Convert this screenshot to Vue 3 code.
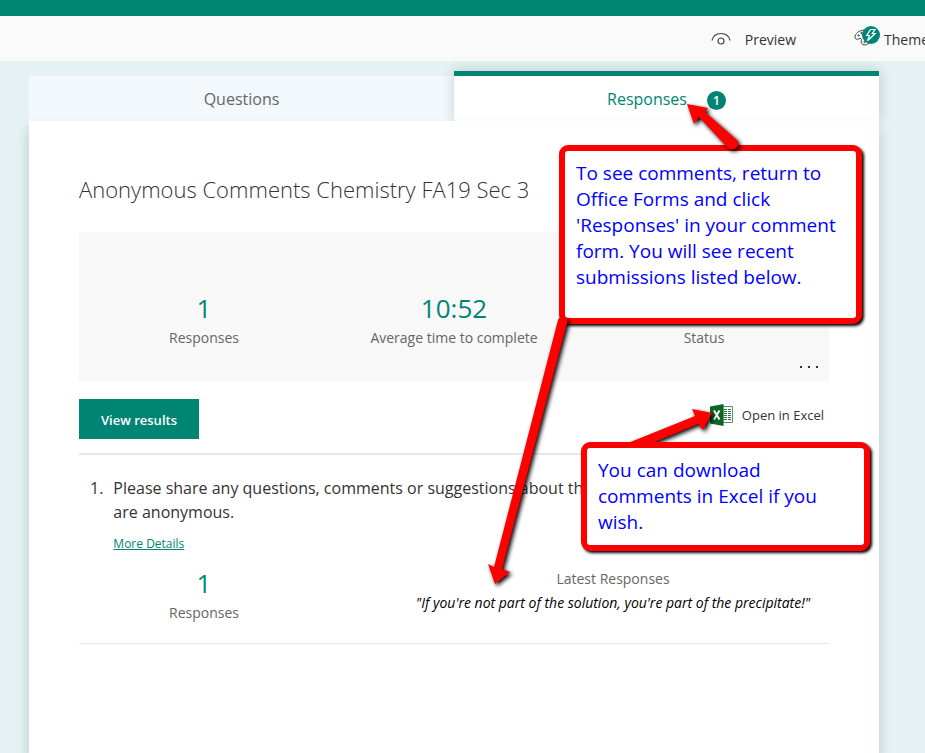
<template>
  <div class="page">
    <div class="brand-bar"></div>

    <header class="toolbar">
      <button type="button" class="tool preview">
        <svg class="eye" viewBox="0 0 20 14" aria-hidden="true">
          <path d="M1 8.500C2 4.200 5.600 1.500 10 1.500S18 4.200 19 8.500" />
          <circle cx="10" cy="9" r="3" />
        </svg>
        <span>Preview</span>
      </button>
      <button type="button" class="tool theme">
        <svg class="palette" viewBox="0 0 26 22" aria-hidden="true">
          <path
            class="outline"
            d="M10 5C5 5.500 1 8.500 1 12.200c0 2.200 2 2.600 3.800 1.600C6.600 12.800 8 13.600 7.400 15.500c-.6 2.200.4 4.600 3.400 4.500 2.400-.1 4.200-1.500 5-3.200"
          />
          <circle class="outline" cx="4.500" cy="10.500" r=".7" />
          <circle class="outline" cx="7.500" cy="8" r=".7" />
          <circle class="outline" cx="10.500" cy="17" r=".7" />
          <circle class="badge-fill" cx="17" cy="10" r="9" />
          <path class="bolt" d="M16.500 4.500h4.500l-2.700 4h2.900l-7.700 7.300 2-5.300h-2.700z" />
        </svg>
        <span>Theme</span>
      </button>
    </header>

    <main class="form">
      <nav class="tabs">
        <button type="button" class="tab">Questions</button>
        <button type="button" class="tab active">
          Responses <span class="count">1</span>
        </button>
      </nav>

      <section class="panel">
        <h1>Anonymous Comments Chemistry FA19 Sec 3</h1>

        <div class="summary">
          <div v-for="stat in stats" :key="stat.label" class="stat">
            <div class="value">{{ stat.value }}</div>
            <div class="label">{{ stat.label }}</div>
          </div>
          <button type="button" class="more" aria-label="More options">
            <i></i><i></i><i></i>
          </button>
        </div>

        <div class="actions">
          <button type="button" class="view-results">View results</button>
          <button type="button" class="excel">
            <svg viewBox="0 0 24 22" aria-hidden="true">
              <path d="M13 2.500h9.500v16H13z" fill="#fff" stroke="#5f8f69" />
              <path
                d="M14 5.500h3M18 5.500h3M14 7.500h3M18 7.500h3M14 9.500h3M18 9.500h3M14 11.500h3M18 11.500h3M14 13.500h3M18 13.500h3M14 15.500h3M18 15.500h3"
                stroke="#2c7543"
              />
              <path d="M0 2.500 13.500 0v22L0 19.500z" fill="#0a6622" />
              <path d="m4 6.500 5.500 9M9.500 6.500 4 15.500" stroke="#fff" stroke-width="2" />
            </svg>
            <span>Open in Excel</span>
          </button>
        </div>

        <article class="question">
          <div class="prompt">
            <span class="number">1.</span>
            <div>
              <p>Please share any questions, comments or suggestions about the<br />are anonymous.</p>
              <a href="#">More Details</a>
            </div>
          </div>
          <div class="answers">
            <div class="stat">
              <div class="value">1</div>
              <div class="label">Responses</div>
            </div>
            <div class="latest">
              <div class="label">Latest Responses</div>
              <q>If you're not part of the solution, you're part of the precipitate!</q>
            </div>
          </div>
        </article>
      </section>
    </main>

    <aside class="callout callout-comments">
      To see comments, return to<br />Office Forms and click<br />'Responses' in your comment<br />form. You
      will see recent<br />submissions listed below.
    </aside>
    <svg class="arrows" width="925" height="753" aria-hidden="true">
      <path d="M687 104 708 108 705 112 737 140Q740 144 737 147Q733 151 728 148L699 117 694 124Z" />
      <path d="M495 584 488 564 494 567 558 320Q560 316 564 317Q569 318 567 323L502 569 510 572Z" />
      <path d="M712 413 692 409 695 416 628 443 632 448 650 444 698 424 703 430Z" />
    </svg>
    <aside class="callout callout-excel">
      You can download<br />comments in Excel if you<br />wish.
    </aside>
  </div>
</template>

<script setup>
const stats = [
  { value: '1', label: 'Responses' },
  { value: '10:52', label: 'Average time to complete' },
  { value: 'Active', label: 'Status' }
];
</script>

<style>
body {
  margin: 0;
}
</style>

<style scoped>
.page {
  position: relative;
  display: flex;
  flex-direction: column;
  min-height: 100vh;
  overflow: hidden;
  background: #e5f1f2;
  color: #333;
  font-family: 'Segoe UI', 'Open Sans', 'Noto Sans', sans-serif;
}

button {
  padding: 0;
  border: 0;
  background: none;
  color: inherit;
  font: inherit;
  cursor: pointer;
}

.brand-bar {
  height: 16px;
  background: #008575;
}

.toolbar {
  display: flex;
  justify-content: flex-end;
  gap: 58px;
  height: 45px;
  padding-top: 1px;
  box-sizing: border-box;
  background: #fafafa;
  font-size: 14px;
}

.tool {
  display: flex;
  align-items: center;
  white-space: nowrap;
}

.preview {
  gap: 14px;
}

.theme {
  gap: 4px;
  margin-right: -4px;
}

.eye {
  width: 20px;
  height: 14px;
  fill: none;
  stroke: #444;
  stroke-width: 1.2;
}

.palette {
  width: 26px;
  height: 22px;
  margin-bottom: 6px;
}

.outline {
  fill: none;
  stroke: #444;
}

.badge-fill {
  fill: #008575;
}

.bolt {
  fill: none;
  stroke: #fff;
  stroke-width: 1.2;
}

.form {
  display: flex;
  flex: 1;
  flex-direction: column;
  margin: 10px 46px 0 29px;
}

.tabs {
  display: flex;
  align-items: flex-end;
}

.tab {
  display: flex;
  flex: 1;
  align-items: center;
  justify-content: center;
  height: 45px;
  background: #f2f8fb;
  color: #666;
  font-size: 16px;
}

.tab.active {
  gap: 20px;
  height: 50px;
  box-sizing: border-box;
  border-top: 5px solid #008575;
  background: #fff;
  box-shadow: 0 0 12px rgba(0, 50, 50, 0.2);
  color: #008575;
}

.count {
  width: 19px;
  height: 19px;
  margin-top: 3px;
  border-radius: 50%;
  background: #008575;
  color: #fff;
  font-size: 12px;
  font-weight: 600;
  line-height: 19px;
}

.panel {
  position: relative;
  flex: 1;
  padding: 50px 50px 0;
  background: #fff;
  box-shadow: 0 8px 12px rgba(0, 50, 50, 0.2);
}

h1 {
  margin: 0 0 25px;
  font-size: 22px;
  font-weight: 300;
  line-height: 36px;
  white-space: nowrap;
}

.summary {
  position: relative;
  display: grid;
  grid-template-columns: repeat(3, 1fr);
  height: 149px;
  padding-top: 58px;
  box-sizing: border-box;
  background: #f8f8f8;
}

.stat {
  text-align: center;
}

.value {
  color: #008575;
  font-size: 26px;
  line-height: 36px;
}

.label {
  color: #666;
  font-size: 14px;
  line-height: 24px;
}

.more {
  position: absolute;
  right: 11px;
  bottom: 9px;
  display: flex;
  gap: 6px;
  padding: 4px 0;
}

.more i {
  width: 2px;
  height: 2px;
  background: #333;
}

.actions {
  display: flex;
  align-items: center;
  justify-content: space-between;
  padding: 18px 0 14px;
  border-bottom: 2px solid #e8e8e8;
}

.view-results {
  width: 120px;
  height: 40px;
  padding-top: 2px;
  background: #008575;
  color: #fff;
  font-size: 13px;
  font-weight: 600;
}

.excel {
  display: flex;
  align-items: center;
  gap: 8px;
  margin: 0 5px 8px 0;
  font-size: 13px;
}

.excel svg {
  width: 24px;
  height: 22px;
  fill: none;
}

.question {
  padding: 21px 0 18px;
  border-bottom: 1px solid #e8e8e8;
}

.prompt {
  display: flex;
  gap: 10px;
  padding-left: 11px;
  font-size: 16px;
  line-height: 24px;
}

.prompt p {
  margin: 0 0 8px;
  white-space: nowrap;
}

.prompt a {
  display: block;
  color: #008575;
  font-size: 12px;
}

.answers {
  display: grid;
  grid-template-columns: 250px 1fr;
  gap: 68px;
  padding-top: 9px;
}

.latest {
  padding-top: 2px;
  text-align: center;
}

.latest q {
  display: block;
  color: #000;
  font-size: 14px;
  font-style: italic;
  line-height: 24px;
  quotes: '"' '"';
  white-space: nowrap;
}

/* Annotations drawn over the form */
.callout {
  position: absolute;
  box-sizing: border-box;
  border: 6px solid #f00;
  border-radius: 9px;
  background: #fff;
  box-shadow: 2px 2px 3px #000;
  color: #00f;
  font-size: 19px;
  line-height: 26px;
  white-space: nowrap;
}

.callout-comments {
  top: 145px;
  left: 559px;
  width: 303px;
  height: 179px;
  padding: 9px 11px;
}

.callout-excel {
  top: 442px;
  left: 581px;
  width: 289px;
  height: 109px;
  padding: 9px 11px;
}

.arrows {
  position: absolute;
  top: 0;
  left: 0;
  fill: #f00;
  filter: drop-shadow(2px 2px 2px #000);
  pointer-events: none;
}
</style>
